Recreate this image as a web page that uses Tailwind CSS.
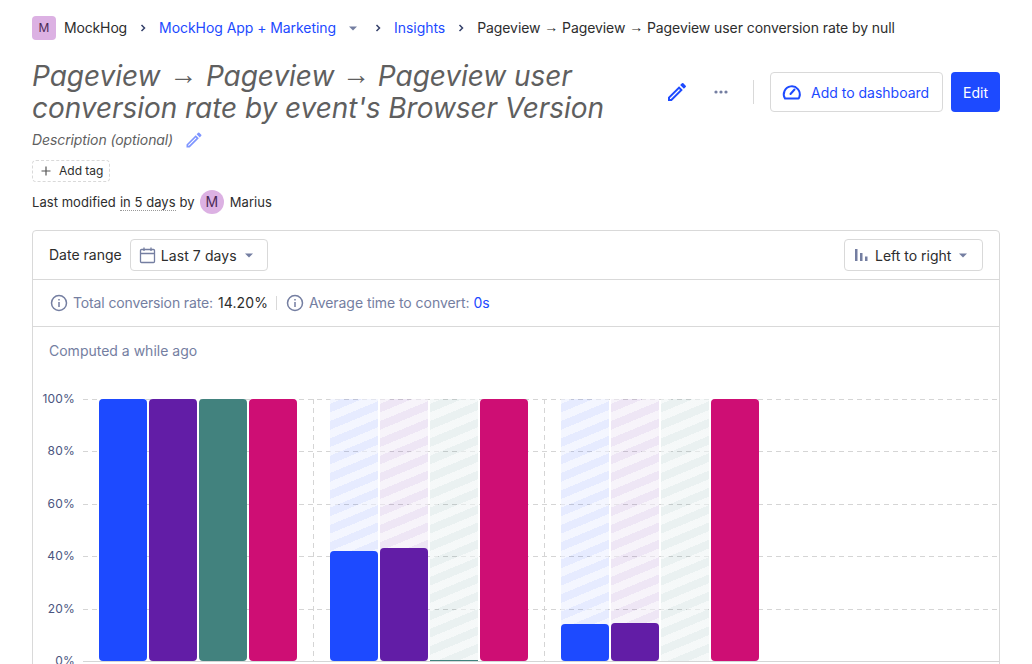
<!DOCTYPE html>
<html lang="en">
<head>
  <meta charset="UTF-8" />
  <title>Pageview funnel insight</title>
  <script src="https://cdn.jsdelivr.net/npm/@tailwindcss/browser@4"></script>
</head>
<body class="bg-white font-['Inter',sans-serif] text-[#2d2d2d] h-[664px] w-[1032px] overflow-hidden">
  <div class="px-8 h-[664px] overflow-hidden">
    <!-- breadcrumbs -->
    <nav class="flex items-center h-6 mt-4 text-sm">
      <span class="w-6 h-6 rounded bg-[#dcb1e3] text-[#4b2a57] flex items-center justify-center text-xs">M</span>
      <span class="ml-2 tracking-[-0.15px]">MockHog</span>
      <svg class="w-4 h-4 ml-2 text-[#35416b]" viewBox="0 0 16 16" fill="none" stroke="currentColor" stroke-width="1.5"><path d="M6.5 5l3 3-3 3"/></svg>
      <span class="ml-2 text-[#1d4aff] tracking-[-0.06px]">MockHog App + Marketing</span>
      <svg class="w-2 h-2 ml-[13px] text-[#747ea1]" viewBox="0 0 8 8" fill="currentColor"><path d="M0 2.5h8L4 6.5z"/></svg>
      <svg class="w-4 h-4 ml-[13px] text-[#35416b]" viewBox="0 0 16 16" fill="none" stroke="currentColor" stroke-width="1.5"><path d="M6.5 5l3 3-3 3"/></svg>
      <span class="ml-2 text-[#1d4aff] tracking-[-0.05px]">Insights</span>
      <svg class="w-4 h-4 ml-2 text-[#35416b]" viewBox="0 0 16 16" fill="none" stroke="currentColor" stroke-width="1.5"><path d="M6.5 5l3 3-3 3"/></svg>
      <span class="ml-2 tracking-[-0.08px]">Pageview <span class="font-['Liberation_Sans'] leading-none align-[1px]">→</span> Pageview <span class="font-['Liberation_Sans'] leading-none align-[1px]">→</span> Pageview user conversion rate by null</span>
    </nav>

    <!-- title row -->
    <div class="flex items-center justify-between mt-5">
      <h1 class="w-[610px] italic text-[#5f5f5f] text-[28px] leading-8 font-normal tracking-[-0.05px]">Pageview <span class="font-['Liberation_Sans'] leading-none align-[2px] px-px">→</span> Pageview <span class="font-['Liberation_Sans'] leading-none align-[2px]">→</span> Pageview user conversion rate by event's Browser Version</h1>
      <div class="flex items-center">
        <svg class="w-6 h-6 text-[#1d4aff]" viewBox="0 0 24 24" fill="currentColor"><path d="M3 17.25V21h3.75L17.81 9.94l-3.75-3.75L3 17.25zM5.92 19H5v-.92l9.06-9.06.92.92L5.92 19zM20.71 7.04a1 1 0 0 0 0-1.41l-2.34-2.34a1 1 0 0 0-1.41 0l-1.83 1.83 3.75 3.75 1.83-1.83z"/></svg>
        <svg class="w-4 h-4 ml-[24px] text-[#747ea1]" viewBox="0 0 16 16" fill="currentColor"><circle cx="3" cy="8" r="1.6"/><circle cx="8" cy="8" r="1.6"/><circle cx="13" cy="8" r="1.6"/></svg>
        <span class="w-px h-6 bg-[#d9d9d9] ml-6"></span>
        <button class="flex items-center h-10 w-[173px] ml-4 border border-[#d9d9d9] rounded text-sm text-[#1d4aff] pl-[10px]">
          <svg class="w-[22px] h-[22px]" viewBox="0 0 22 22" fill="none" stroke="currentColor" stroke-width="2"><path d="M4 17.5a8 8 0 1 1 14.5-2c-.3 1.2-.8 2-1 2H4z"/><path d="M9.5 13l4-4.5" stroke-linecap="round"/></svg>
          <span class="ml-2 mt-[2px]">Add to dashboard</span>
        </button>
        <button class="h-10 w-[49px] ml-2 pt-px rounded bg-[#1d4aff] text-white text-sm">Edit</button>
      </div>
    </div>

    <div class="flex items-center mt-1 h-6 text-sm italic text-[#5f5f5f] tracking-[-0.1px]">
      <span>Description (optional)</span>
      <svg class="w-5 h-5 ml-[11px] text-[#7e95ff]" viewBox="0 0 24 24" fill="currentColor"><path d="M3 17.25V21h3.75L17.81 9.94l-3.75-3.75L3 17.25zM5.92 19H5v-.92l9.06-9.06.92.92L5.92 19zM20.71 7.04a1 1 0 0 0 0-1.41l-2.34-2.34a1 1 0 0 0-1.41 0l-1.83 1.83 3.75 3.75 1.83-1.83z"/></svg>
    </div>

    <div class="flex items-center w-[78px] h-[22px] mt-[8px] border border-dashed border-[#d9d9d9] rounded text-xs pl-[7px]">
      <svg class="w-3 h-3" viewBox="0 0 12 12" fill="none" stroke="#555" stroke-width="1.2"><path d="M6 1.5v9M1.5 6h9"/></svg>
      <span class="ml-[7px]">Add tag</span>
    </div>

    <div class="flex items-center h-6 mt-[8px] text-[13px] tracking-[0.05px]">
      <span class="mt-[2px]">Last modified</span>
      <span class="ml-1 border-b border-dotted border-[#999] leading-4">in 5 days</span>
      <span class="ml-1 mt-[2px]">by</span>
      <span class="w-6 h-6 ml-[5px] rounded-full bg-[#dcb1e3] text-[#4b2a57] flex items-center justify-center text-sm">M</span>
      <span class="ml-[6px] mt-[2px]">Marius</span>
    </div>

    <!-- insight card -->
    <section class="mt-4 border border-[#d9d9d9] rounded h-[600px]">
      <div class="flex items-center justify-between h-[49px] px-4 border-b border-[#d9d9d9] text-sm">
        <div class="flex items-center">
          <span>Date range</span>
          <div class="flex items-center w-[138px] h-8 ml-2 border border-[#d9d9d9] rounded pl-2">
            <svg class="w-[17px] h-[17px] text-[#747ea1]" viewBox="0 0 17 17" fill="none" stroke="currentColor" stroke-width="1.3"><rect x="1.5" y="2.5" width="14" height="13" rx="1"/><path d="M1.5 6.5h14M5 .5v3.5M12 .5v3.5"/></svg>
            <span class="ml-[5px] mt-[2px] tracking-[0.1px]">Last 7 days</span>
            <svg class="w-2 h-2 ml-[8px] text-[#747ea1]" viewBox="0 0 8 8" fill="currentColor"><path d="M0 2.5h8L4 6.5z"/></svg>
          </div>
        </div>
        <div class="flex items-center w-[139px] h-8 border border-[#d9d9d9] rounded pl-[10px]">
          <svg class="w-[14px] h-[14px] text-[#747ea1]" viewBox="0 0 14 14" fill="currentColor"><rect x="0" y="1" width="2.5" height="12"/><rect x="5" y="5" width="2.5" height="8"/><rect x="10" y="8.5" width="2.5" height="4.5"/></svg>
          <span class="ml-[6px] mt-[2px]">Left to right</span>
          <svg class="w-2 h-2 ml-[8px] text-[#747ea1]" viewBox="0 0 8 8" fill="currentColor"><path d="M0 2.5h8L4 6.5z"/></svg>
        </div>
      </div>

      <div class="flex items-center h-[47px] pl-4 border-b border-[#d9d9d9] text-sm text-[#747ea1]">
        <svg class="w-[18px] h-[18px] ml-px" viewBox="0 0 18 18" fill="none" stroke="currentColor" stroke-width="1.5"><circle cx="9" cy="9" r="7.5"/><path d="M9 8v5M9 5v1.5"/></svg>
        <span class="ml-[5px] tracking-[-0.13px]">Total conversion rate:</span>
        <span class="ml-[5px] text-[#2d2d2d] tracking-[0.1px]">14.20%</span>
        <span class="w-px h-[14px] bg-[#d9d9d9] ml-2"></span>
        <svg class="w-[18px] h-[18px] ml-[9px]" viewBox="0 0 18 18" fill="none" stroke="currentColor" stroke-width="1.5"><circle cx="9" cy="9" r="7.5"/><path d="M9 8v5M9 5v1.5"/></svg>
        <span class="ml-[5px] tracking-[-0.05px]">Average time to convert:</span>
        <span class="ml-1 text-[#1d4aff]">0s</span>
      </div>

      <div class="px-4 pt-[14px] text-sm text-[#747ea1] leading-5">Computed a while ago</div>

      <!-- chart -->
      <div class="relative mt-[38px] h-[263px]">
        <!-- axis labels -->
        <div class="absolute left-0 top-[-9px] w-[42px] text-right text-xs text-[#4a5580] leading-[18px] tracking-[0.2px]">
          <div class="h-[52.4px]">100%</div>
          <div class="h-[52.4px]">80%</div>
          <div class="h-[52.4px]">60%</div>
          <div class="h-[52.4px]">40%</div>
          <div class="h-[52.4px]">20%</div>
          <div class="h-[18px]">0%</div>
        </div>
        <!-- grid -->
        <div class="absolute left-[50px] right-0 top-0 bottom-0 flex flex-col justify-between">
          <div class="h-px bg-[repeating-linear-gradient(to_right,#d5d5d5_0,#d5d5d5_5px,transparent_5px,transparent_9px)]"></div>
          <div class="h-px bg-[repeating-linear-gradient(to_right,#d5d5d5_0,#d5d5d5_5px,transparent_5px,transparent_9px)]"></div>
          <div class="h-px bg-[repeating-linear-gradient(to_right,#d5d5d5_0,#d5d5d5_5px,transparent_5px,transparent_9px)]"></div>
          <div class="h-px bg-[repeating-linear-gradient(to_right,#d5d5d5_0,#d5d5d5_5px,transparent_5px,transparent_9px)]"></div>
          <div class="h-px bg-[repeating-linear-gradient(to_right,#d5d5d5_0,#d5d5d5_5px,transparent_5px,transparent_9px)]"></div>
          <div class="h-px bg-[#d5d5d5]"></div>
        </div>
        <div class="absolute left-[280px] top-0 bottom-0 w-px bg-[repeating-linear-gradient(to_bottom,#d5d5d5_0,#d5d5d5_5px,transparent_5px,transparent_9px)]"></div>
        <div class="absolute left-[511px] top-0 bottom-0 w-px bg-[repeating-linear-gradient(to_bottom,#d5d5d5_0,#d5d5d5_5px,transparent_5px,transparent_9px)]"></div>
        <!-- bars -->
        <div class="absolute left-[66px] top-0 bottom-px flex items-stretch">
          <div class="flex gap-[2px] w-[198px]">
            <div class="w-12 rounded-sm bg-[#1d4aff]"></div>
            <div class="w-12 rounded-sm bg-[#621da6]"></div>
            <div class="w-12 rounded-sm bg-[#42827e]"></div>
            <div class="w-12 rounded-sm bg-[#ce0e74]"></div>
          </div>
          <div class="flex gap-[2px] w-[198px] ml-[33px]">
            <div class="relative w-12 bg-[#1d4aff1c] bg-[repeating-linear-gradient(-22.5deg,rgba(255,255,255,0.55),rgba(255,255,255,0.55)_8px,transparent_8px,transparent_16px)]">
              <div class="absolute bottom-0 w-full h-[42%] rounded-sm bg-[#1d4aff]"></div>
            </div>
            <div class="relative w-12 bg-[#621da61c] bg-[repeating-linear-gradient(-22.5deg,rgba(255,255,255,0.55),rgba(255,255,255,0.55)_8px,transparent_8px,transparent_16px)]">
              <div class="absolute bottom-0 w-full h-[43.2%] rounded-sm bg-[#621da6]"></div>
            </div>
            <div class="relative w-12 bg-[#42827e1c] bg-[repeating-linear-gradient(-22.5deg,rgba(255,255,255,0.55),rgba(255,255,255,0.55)_8px,transparent_8px,transparent_16px)]">
              <div class="absolute bottom-0 w-full h-px bg-[#42827e]"></div>
            </div>
            <div class="w-12 rounded-sm bg-[#ce0e74]"></div>
          </div>
          <div class="flex gap-[2px] w-[198px] ml-[33px]">
            <div class="relative w-12 bg-[#1d4aff1c] bg-[repeating-linear-gradient(-22.5deg,rgba(255,255,255,0.55),rgba(255,255,255,0.55)_8px,transparent_8px,transparent_16px)]">
              <div class="absolute bottom-0 w-full h-[14.2%] rounded-sm bg-[#1d4aff]"></div>
            </div>
            <div class="relative w-12 bg-[#621da61c] bg-[repeating-linear-gradient(-22.5deg,rgba(255,255,255,0.55),rgba(255,255,255,0.55)_8px,transparent_8px,transparent_16px)]">
              <div class="absolute bottom-0 w-full h-[14.6%] rounded-sm bg-[#621da6]"></div>
            </div>
            <div class="w-12 bg-[#42827e1c] bg-[repeating-linear-gradient(-22.5deg,rgba(255,255,255,0.55),rgba(255,255,255,0.55)_8px,transparent_8px,transparent_16px)]"></div>
            <div class="w-12 rounded-sm bg-[#ce0e74]"></div>
          </div>
        </div>
      </div>
    </section>
  </div>
</body>
</html>
